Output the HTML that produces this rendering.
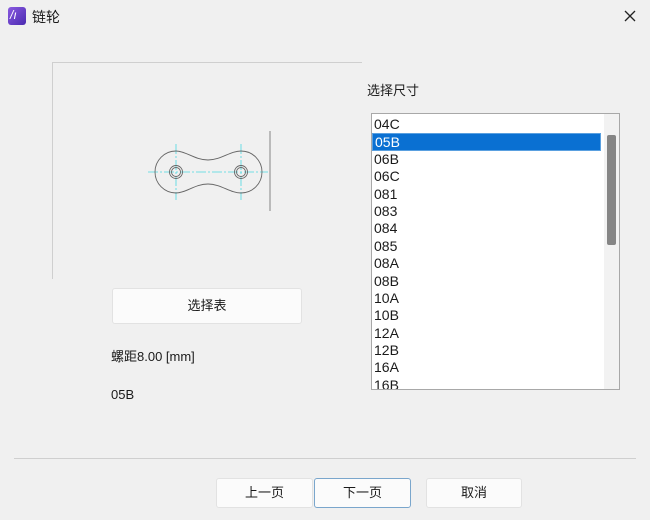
<!DOCTYPE html>
<html><head><meta charset="utf-8"><style>
*{margin:0;padding:0;box-sizing:border-box}
body{width:650px;height:520px;background:#f0f0f0;font-family:"Liberation Sans","Noto Sans CJK SC",sans-serif;font-size:13px;color:#1a1a1a;position:relative;overflow:hidden}
.a{position:absolute}
.btn{position:absolute;background:#fbfbfb;border:1px solid #e2e2e2;border-radius:3px;text-align:center;font-size:13px}
.list{position:absolute;left:371px;top:113px;width:249px;height:277px;background:#fff;border:1px solid #a8a8a8;overflow:hidden;padding-top:2px}
.list div{height:17.4px;line-height:17.4px;padding-left:2px;font-size:14px}
.sel{background:#0a70d2;color:#fff;width:229px;border:1px solid #5aa0e0}
</style></head><body>
<div class="a" style="left:8px;top:7px;width:18px;height:18px;border-radius:3px;background:linear-gradient(135deg,#8a5ae0,#4a2ab0)"></div>
<div class="a" style="left:10px;top:8px;color:#fff;font-size:12px;font-style:italic">/ı</div>
<div class="a" style="left:32px;top:7px;font-size:14px">链轮</div>
<svg class="a" style="left:622px;top:8px" width="16" height="16"><path d="M3 3L13 13M13 3L3 13" stroke="#222" stroke-width="1.3"/></svg>

<div class="a" style="left:52px;top:62px;width:310px;height:217px;border-top:1px solid #cfcfcf;border-left:1px solid #cfcfcf"></div>
<svg class="a" style="left:0;top:0" width="360" height="290">
<g stroke="#4ad8e0" stroke-width="0.8" stroke-dasharray="10 2 2 2" fill="none">
<line x1="148" y1="172" x2="268" y2="172"/>
<line x1="176" y1="144" x2="176" y2="200"/>
<line x1="241" y1="144" x2="241" y2="200"/>
</g>
<path d="M176 151 C186 151 195 160 208 160 C221 160 230 151 241 151 A21 21 0 0 1 241 193 C230 193 221 184 208 184 C195 184 186 193 176 193 A21 21 0 0 1 176 151Z" fill="none" stroke="#666" stroke-width="0.9"/>
<circle cx="176" cy="172" r="6.5" fill="none" stroke="#666" stroke-width="0.9"/>
<circle cx="176" cy="172" r="4.5" fill="none" stroke="#666" stroke-width="0.9"/>
<circle cx="241" cy="172" r="6.5" fill="none" stroke="#666" stroke-width="0.9"/>
<circle cx="241" cy="172" r="4.5" fill="none" stroke="#666" stroke-width="0.9"/>
<line x1="270" y1="131" x2="270" y2="211" stroke="#777" stroke-width="0.9"/>
</svg>

<div class="btn" style="left:112px;top:288px;width:190px;height:36px;line-height:34px">选择表</div>
<div class="a" style="left:111px;top:346px">螺距8.00 [mm]</div>
<div class="a" style="left:111px;top:387px">05B</div>

<div class="a" style="left:367px;top:80px">选择尺寸</div>
<div class="list">
<div>04C</div><div class="sel">05B</div><div>06B</div><div>06C</div><div>081</div><div>083</div><div>084</div><div>085</div><div>08A</div><div>08B</div><div>10A</div><div>10B</div><div>12A</div><div>12B</div><div>16A</div><div>16B</div>
<span class="a" style="left:232px;top:0;width:15px;height:275px;background:#f2f2f2"></span>
<span class="a" style="left:235px;top:21px;width:9px;height:110px;background:#858585;border-radius:2px"></span>
</div>

<div class="a" style="left:14px;top:458px;width:622px;height:1px;background:#cfcfcf"></div>
<div class="btn" style="left:216px;top:478px;width:97px;height:30px;line-height:28px">上一页</div>
<div class="btn" style="left:314px;top:478px;width:97px;height:30px;line-height:28px;border-color:#7aa6cc">下一页</div>
<div class="btn" style="left:426px;top:478px;width:96px;height:30px;line-height:28px">取消</div>
</body></html>
